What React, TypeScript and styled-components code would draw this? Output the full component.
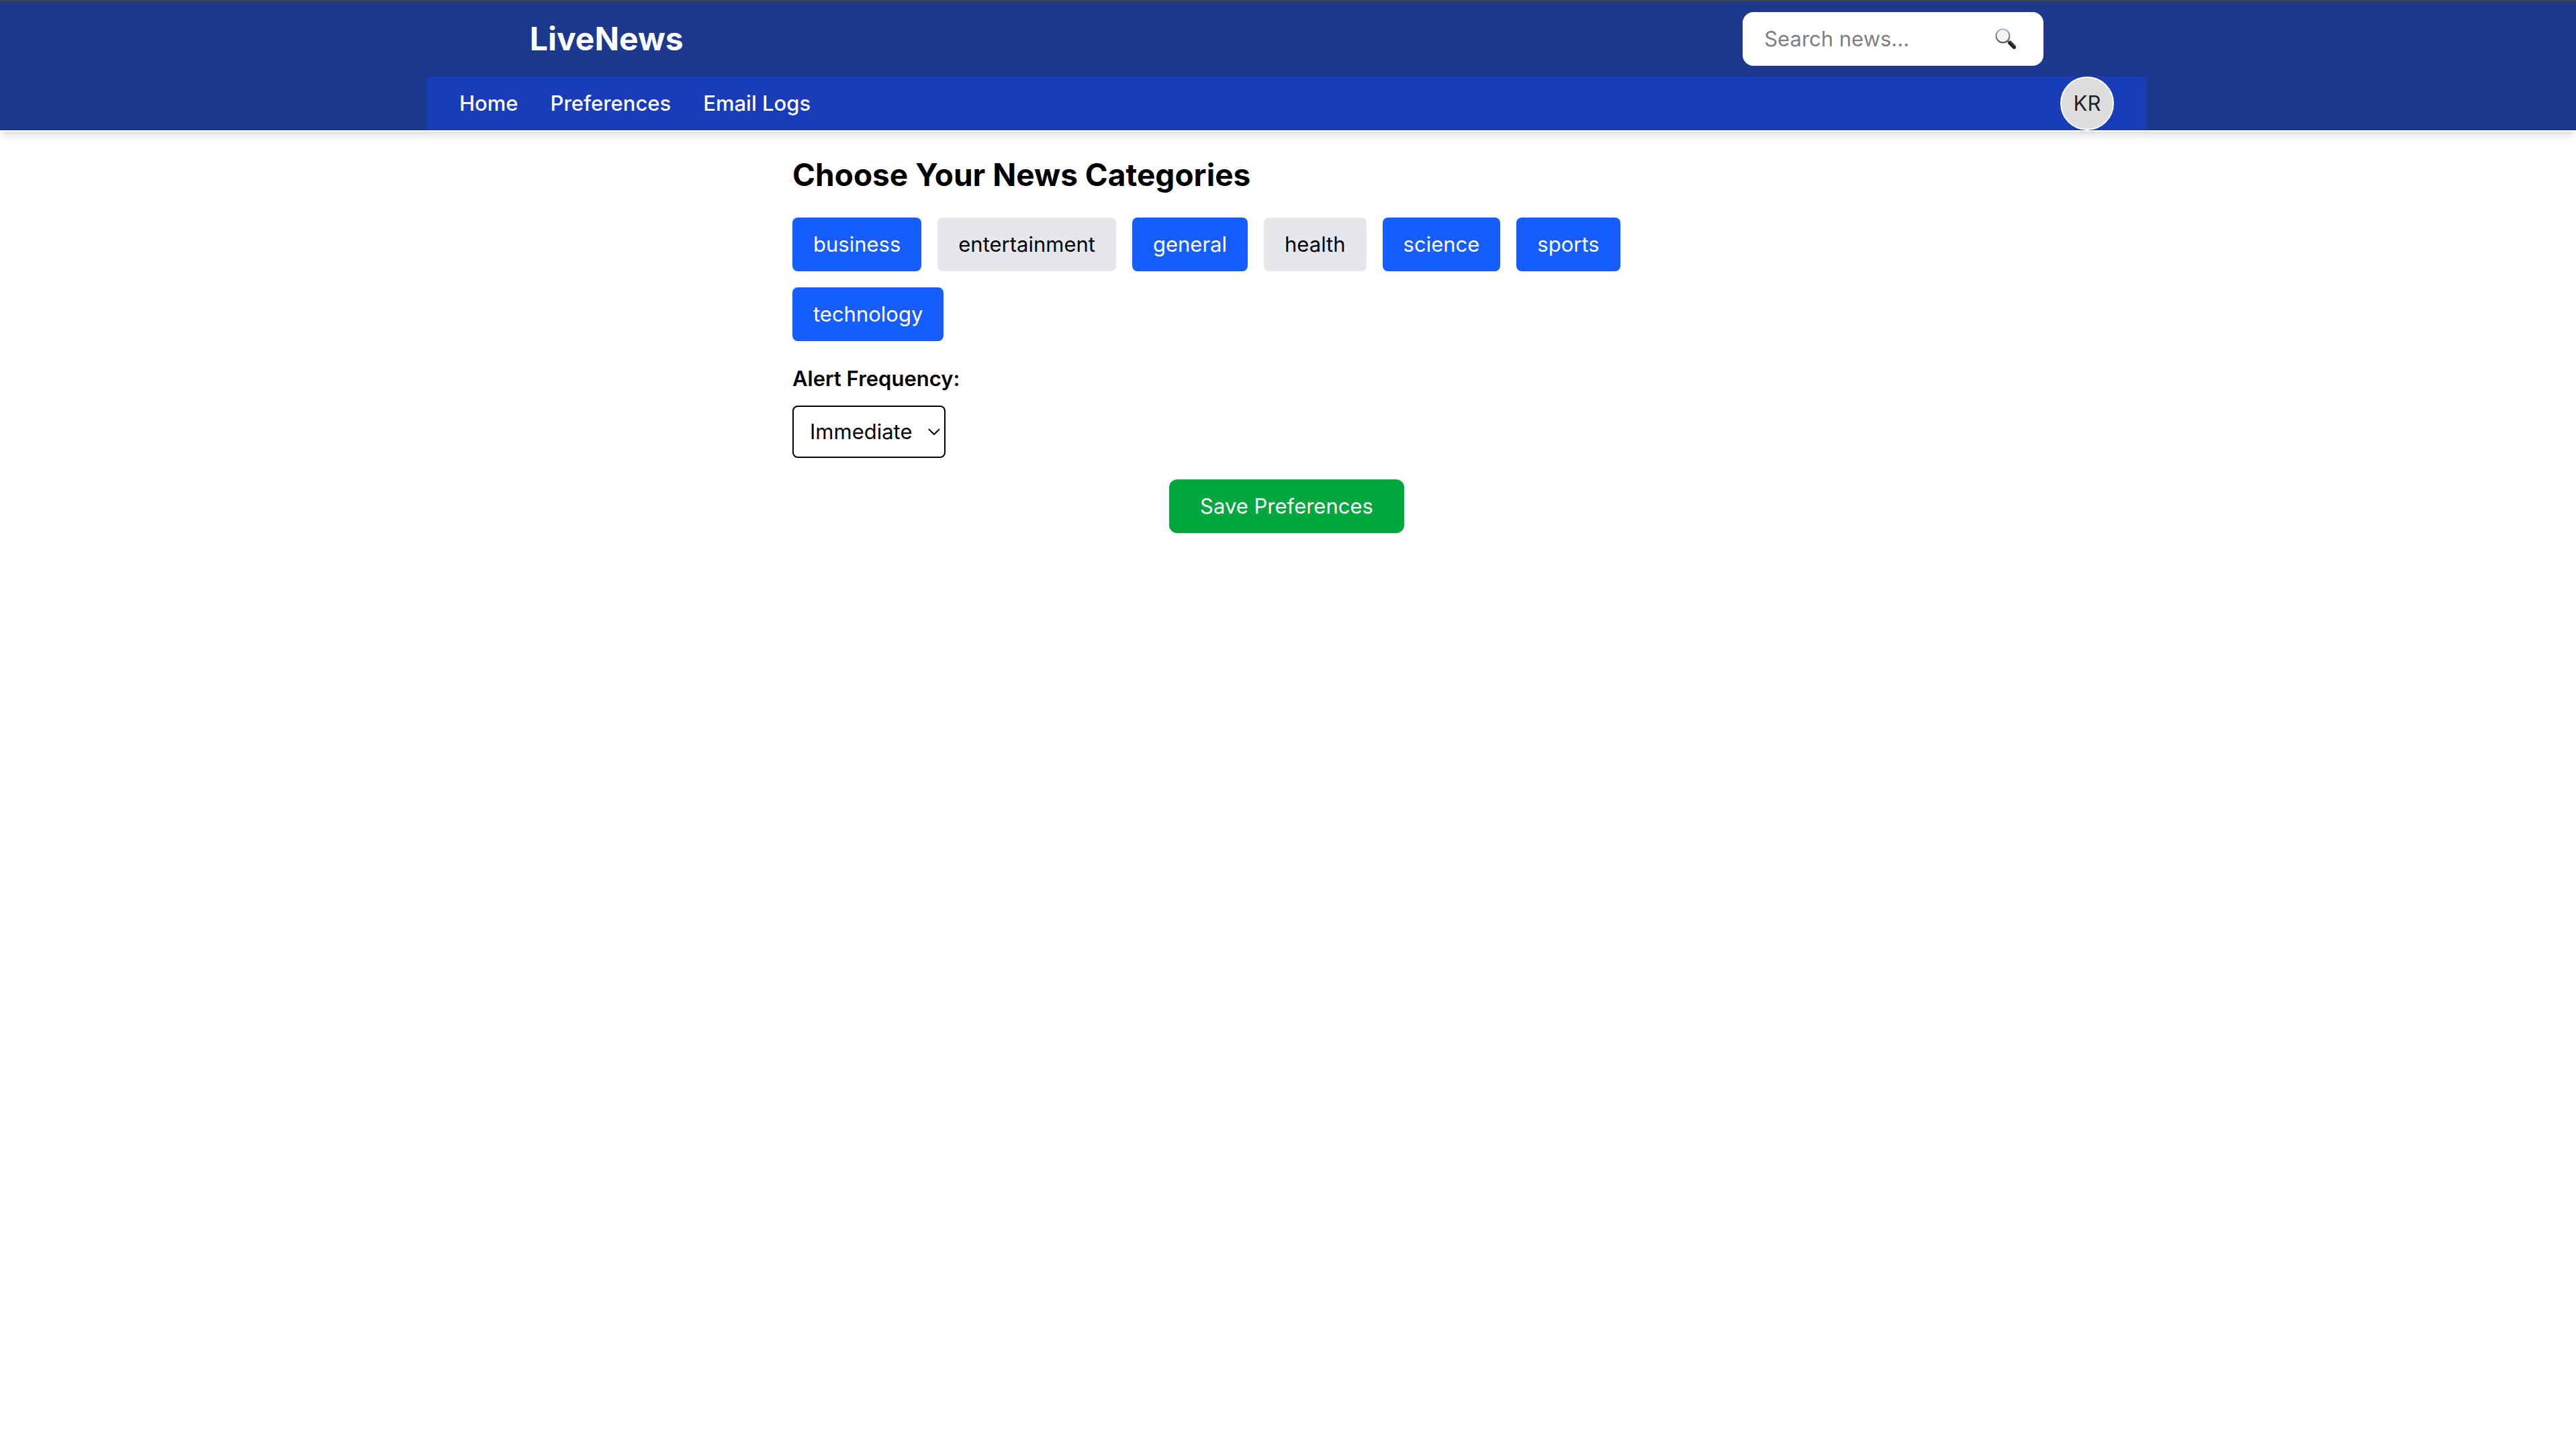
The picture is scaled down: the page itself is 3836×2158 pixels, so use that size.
import React, { useState } from "react";
import styled, { createGlobalStyle } from "styled-components";

const GlobalStyle = createGlobalStyle`
  *, *::before, *::after { box-sizing: border-box; }
  body {
    margin: 0;
    background: #fff;
    color: #000;
    font-family: Inter, "Liberation Sans", sans-serif;
    font-size: 31px;
    line-height: 48px;
  }
  button, input, select { font: inherit; color: inherit; }
  h1, h2 { margin: 0; }
`;

const Header = styled.header`
  padding-right: 4px;
  background: #1c398e;
  border-top: 2px solid #444;
  border-bottom: 2px solid #fff;
  color: #fff;
  box-shadow: 0 8px 12px -2px rgba(0, 0, 0, 0.1), 0 4px 8px -4px rgba(0, 0, 0, 0.1);
`;

const TopBar = styled.div`
  display: flex;
  justify-content: space-around;
  align-items: center;
  padding: 16px 0;
`;

const Logo = styled.h1`
  font-size: 48px;
  line-height: 64px;
  font-weight: 700;
`;

const SearchForm = styled.form`
  display: flex;
  align-items: center;
  width: 448px;
  height: 80px;
  padding: 0 32px;
  background: #fff;
  border-radius: 16px;
`;

const SearchInput = styled.input`
  flex: 1;
  min-width: 0;
  padding: 0;
  border: 0;
  outline: 0;
  background: transparent;
  color: #000;
  &::placeholder { color: #808080; opacity: 1; }
`;

const SearchButton = styled.button`
  display: flex;
  padding: 0 8px;
  border: 0;
  background: none;
  cursor: pointer;
`;

const Nav = styled.nav`
  display: flex;
  align-items: center;
  justify-content: space-between;
  max-width: 2560px;
  margin: 0 auto;
  padding: 0 48px;
  background: #193cb8;
`;

const NavLinks = styled.div`
  display: flex;
  gap: 48px;
`;

const NavLink = styled.a`
  color: #fff;
  font-weight: 500;
  text-decoration: none;
`;

const Avatar = styled.button`
  width: 80px;
  height: 80px;
  padding: 0;
  border: 2px solid #fff;
  border-radius: 50%;
  background: #ddd;
  color: #222;
  cursor: pointer;
`;

const Page = styled.div`
  padding-right: 4px;
`;

const Main = styled.main`
  max-width: 1536px;
  margin: 0 auto;
  padding: 32px;
`;

const Title = styled.h2`
  margin-bottom: 32px;
  font-size: 46px;
  line-height: 64px;
  font-weight: 700;
`;

const Chips = styled.div`
  display: flex;
  flex-wrap: wrap;
  gap: 24px;
  margin-bottom: 32px;
`;

const Chip = styled.button<{ $on: boolean }>`
  padding: 16px 31px;
  border: 0;
  border-radius: 8px;
  background: ${(p) => (p.$on ? "#155dfc" : "#e5e7eb")};
  color: ${(p) => (p.$on ? "#fff" : "#000")};
  cursor: pointer;
`;

const Label = styled.label`
  display: block;
  margin-bottom: 16px;
  font-weight: 600;
`;

const SelectBox = styled.div`
  display: inline-grid;
  align-items: center;
  margin-bottom: 32px;
  & > * { grid-area: 1 / 1; }
`;

const Select = styled.select`
  appearance: none;
  width: 228px;
  height: 78px;
  padding: 0 24px;
  border: 2px solid #000;
  border-radius: 8px;
  background: #fff;
`;

const Chevron = styled.svg`
  justify-self: end;
  margin-right: 8px;
  pointer-events: none;
`;

const Actions = styled.div`
  display: flex;
  justify-content: center;
`;

const SaveButton = styled.button`
  padding: 16px 46px;
  border: 0;
  border-radius: 12px;
  background: #00a63e;
  color: #fff;
  cursor: pointer;
`;

const MagnifierIcon = () => (
  <svg width="32" height="32" viewBox="0 0 32 32" aria-hidden="true">
    <defs>
      <linearGradient id="rim" x1="0" y1="0" x2="0" y2="1">
        <stop offset="0" stopColor="#9fbfe0" />
        <stop offset="0.45" stopColor="#7d8790" />
        <stop offset="1" stopColor="#4c5256" />
      </linearGradient>
      <linearGradient id="grip" x1="0" y1="1" x2="1" y2="0">
        <stop offset="0" stopColor="#0c0e10" />
        <stop offset="0.5" stopColor="#202428" />
        <stop offset="0.7" stopColor="#5c646b" />
        <stop offset="1" stopColor="#15181a" />
      </linearGradient>
    </defs>
    <path d="M18.5 18.5l3 3" stroke="#555" strokeWidth="2.5" />
    <circle cx="11.5" cy="11.5" r="10" fill="#f4f4f4" stroke="url(#rim)" strokeWidth="2" />
    <path d="M19 21.5 22 18.5 Q23 18 24 19 L31 26.5 Q32 28 30.5 30 Q28.5 32 27 30.8 L19.5 23.5 Q18.5 22.5 19 21.5z" fill="url(#grip)" />
  </svg>
);

const categories = ["business", "entertainment", "general", "health", "science", "sports", "technology"];

export default function App() {
  const [selected, setSelected] = useState(["business", "general", "science", "sports", "technology"]);
  const toggle = (name: string) =>
    setSelected((now) => (now.includes(name) ? now.filter((n) => n !== name) : [...now, name]));

  return (
    <>
      <GlobalStyle />
      <Header>
        <TopBar>
          <Logo>LiveNews</Logo>
          <SearchForm role="search" onSubmit={(e) => e.preventDefault()}>
            <SearchInput type="text" placeholder="Search news..." aria-label="Search news" />
            <SearchButton type="submit" aria-label="Search">
              <MagnifierIcon />
            </SearchButton>
          </SearchForm>
        </TopBar>
        <Nav>
          <NavLinks>
            <NavLink href="#home">Home</NavLink>
            <NavLink href="#preferences">Preferences</NavLink>
            <NavLink href="#email-logs">Email Logs</NavLink>
          </NavLinks>
          <Avatar type="button">KR</Avatar>
        </Nav>
      </Header>
      <Page>
        <Main>
          <Title>Choose Your News Categories</Title>
          <Chips>
            {categories.map((name) => (
              <Chip
                key={name}
                type="button"
                $on={selected.includes(name)}
                aria-pressed={selected.includes(name)}
                onClick={() => toggle(name)}
              >
                {name}
              </Chip>
            ))}
          </Chips>
          <Label htmlFor="frequency">Alert Frequency:</Label>
          <SelectBox>
            <Select id="frequency" defaultValue="Immediate">
              <option>Immediate</option>
              <option>Daily</option>
              <option>Weekly</option>
            </Select>
            <Chevron width="18" height="10" viewBox="0 0 18 10" fill="none" stroke="#000" strokeWidth="2" aria-hidden="true">
              <path d="M1 1l8 8 8-8" />
            </Chevron>
          </SelectBox>
          <Actions>
            <SaveButton type="button">Save Preferences</SaveButton>
          </Actions>
        </Main>
      </Page>
    </>
  );
}
